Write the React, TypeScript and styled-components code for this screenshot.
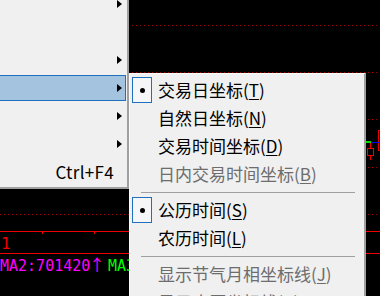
import React from 'react';
import styled, { createGlobalStyle } from 'styled-components';

const Global = createGlobalStyle`
  html, body { margin: 0; padding: 0; background: #000; }
  body { width: 380px; height: 296px; overflow: hidden; }
`;

const Screen = styled.div`
  position: relative;
  width: 380px;
  height: 296px;
  overflow: hidden;
  background: #000;
`;

const Chart = styled.svg`
  display: block;
`;

const LegendText = styled.text`
  font-family: "DejaVu Sans Mono", monospace;
  font-size: 15px;
  white-space: pre;
`;

const TrendMark = styled.tspan`
  font-family: "Noto Sans CJK SC", "DejaVu Sans Mono", monospace;
  font-size: 16px;
`;

const ScaleText = styled.text`
  font-family: "DejaVu Sans Mono", monospace;
  font-size: 16px;
`;

const Popup = styled.div`
  position: absolute;
  box-sizing: border-box;
  background: #f0f0f0;
  border-style: solid;
  border-color: #fbfbfb #a0a0a0 #a0a0a0 #fbfbfb;
  font-family: "Microsoft YaHei", "Noto Sans CJK SC", sans-serif;
  font-size: 17px;
  color: #000;
  display: flex;
  flex-direction: column;
`;

const ParentMenu = styled(Popup)`
  left: -40px;
  top: -13px;
  width: 169px;
  border-width: 1px 2px 2px 1px;
  padding: 2px 1px 1px 2px;
`;

const SubMenu = styled(Popup)`
  left: 129px;
  top: 73px;
  width: 237px;
  height: 260px;
  border-width: 1px 2px 2px 1px;
  padding: 2px;
`;

const ParentItem = styled.div<{ $hot?: boolean }>`
  box-sizing: border-box;
  height: 26px;
  margin: 1px 0;
  display: flex;
  align-items: center;
  justify-content: flex-end;
  border: 1px solid ${p => (p.$hot ? '#1f6fbd' : 'transparent')};
  background: ${p => (p.$hot ? '#a4c3de' : 'transparent')};
  padding-right: 3px;
`;

const Shortcut = styled.span`
  line-height: 26px;
  margin-right: 3px;
  letter-spacing: 0.3px;
`;

const Arrow = styled.span`
  width: 0;
  height: 0;
  border-top: 4.5px solid transparent;
  border-bottom: 4.5px solid transparent;
  border-left: 5px solid #000;
`;

const ArrowSlot = styled.span`
  width: 5px;
  display: flex;
`;

const Item = styled.div<{ $disabled?: boolean }>`
  height: 28px;
  display: flex;
  align-items: center;
  color: ${p => (p.$disabled ? '#6d6d6d' : '#000')};
  white-space: nowrap;
`;

const CheckBox = styled.div<{ $on?: boolean }>`
  box-sizing: border-box;
  width: 20px;
  height: 26px;
  flex: none;
  display: flex;
  align-items: center;
  justify-content: center;
  border: 1px solid ${p => (p.$on ? '#1f6fbd' : 'transparent')};
  background: ${p => (p.$on ? '#f4f6f8' : 'transparent')};
`;

const Dot = styled.span`
  width: 5px;
  height: 5px;
  border-radius: 50%;
  background: #000;
`;

const Label = styled.span`
  margin-left: 6px;
  line-height: 28px;
`;

const Key = styled.u`
  text-decoration-thickness: 1px;
  text-underline-offset: 2px;
`;

const Separator = styled.div`
  height: 8px;
  display: flex;
  align-items: center;
  padding: 0 7px 0 9px;
  &::after {
    content: '';
    flex: 1;
    height: 1px;
    background: #a0a0a0;
  }
`;

type ParentEntry = { arrow?: boolean; hot?: boolean; shortcut?: string };

const parentItems: ParentEntry[] = [
  { arrow: true },
  {},
  { arrow: true },
  { arrow: true, hot: true },
  { arrow: true },
  { arrow: true },
  { shortcut: 'Ctrl+F4' },
];

type SubEntry =
  | { sep: true }
  | { text: string; key: string; checked?: boolean; disabled?: boolean };

const subItems: SubEntry[] = [
  { text: '交易日坐标', key: 'T', checked: true },
  { text: '自然日坐标', key: 'N' },
  { text: '交易时间坐标', key: 'D' },
  { text: '日内交易时间坐标', key: 'B', disabled: true },
  { sep: true },
  { text: '公历时间', key: 'S', checked: true },
  { text: '农历时间', key: 'L' },
  { sep: true },
  { text: '显示节气月相坐标线', key: 'J', disabled: true },
  { text: '显示农历坐标线', key: 'K', disabled: true },
];

const dotted = [25.5, 72.5, 119.5, 167.5, 214.5];
const solid = [231.5, 253.5];

export default function App() {
  return (
    <>
      <Global />
      <Screen>
        <Chart width={380} height={296} viewBox="0 0 380 296">
          {dotted.map(y => (
            <line key={y} x1={0} x2={380} y1={y} y2={y} stroke="#a80000" strokeDasharray="1 3" />
          ))}
          {solid.map(y => (
            <line key={y} x1={0} x2={380} y1={y} y2={y} stroke="#f00000" />
          ))}
          <line x1={42.5} x2={42.5} y1={231} y2={234} stroke="#f00000" />
          <line x1={94.5} x2={94.5} y1={231} y2={234} stroke="#f00000" />
          <ScaleText x={1} y={249} fill="#f00000">1</ScaleText>
          <line x1={370.5} x2={370.5} y1={142} y2={160} stroke="#f00000" />
          <rect x={367.5} y={148.5} width={6} height={7} fill="#000" stroke="#f00000" />
          <rect x={378.5} y={130.5} width={6} height={20} fill="none" stroke="#f00000" />
          <rect x={366} y={141} width={5} height={2} fill="#00e000" />
          <line x1={371} x2={380} y1={142.5} y2={142.5} stroke="#0000ff" />
          <LegendText x={0} y={271}>
            <tspan fill="#ff00ff">MA2:701420</tspan>
            <TrendMark fill="#ff00ff" x={89}>↑</TrendMark>
            <tspan fill="#00ff00" x={108}>MA3:689312</tspan>
          </LegendText>
        </Chart>

        <ParentMenu>
          {parentItems.map((it, i) => (
            <ParentItem key={i} $hot={it.hot}>
              {it.shortcut && <Shortcut>{it.shortcut}</Shortcut>}
              <ArrowSlot>{it.arrow && <Arrow />}</ArrowSlot>
            </ParentItem>
          ))}
        </ParentMenu>

        <SubMenu>
          {subItems.map((it, i) =>
            'sep' in it ? (
              <Separator key={i} />
            ) : (
              <Item key={i} $disabled={it.disabled}>
                <CheckBox $on={it.checked}>{it.checked && <Dot />}</CheckBox>
                <Label>
                  {it.text}(<Key>{it.key}</Key>)
                </Label>
              </Item>
            )
          )}
        </SubMenu>
      </Screen>
    </>
  );
}
